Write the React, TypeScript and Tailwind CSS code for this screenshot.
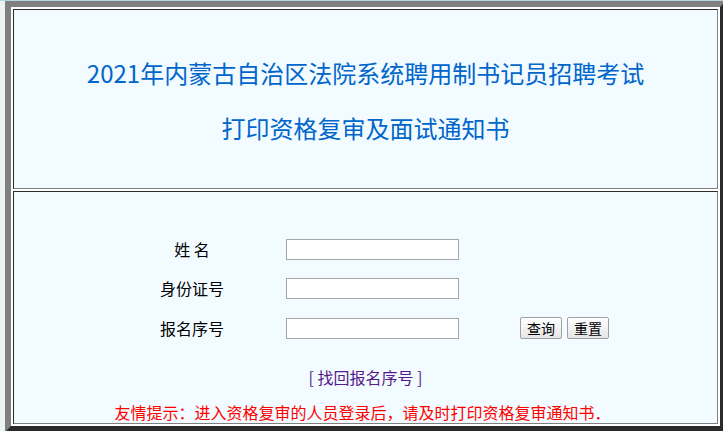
import { useState } from "react";

const rows = [
  { label: "姓 名", key: "name" },
  { label: "身份证号", key: "idcard" },
  { label: "报名序号", key: "serial" },
];

export default function App() {
  const [form, setForm] = useState<Record<string, string>>({ name: "", idcard: "", serial: "" })

  return (
    <div className="w-[723px] h-[431px] overflow-hidden bg-[#eef3f3] font-['Noto_Sans_CJK_SC',sans-serif]">
      <div className="h-[1px] bg-[#b4d6e0]" />
      <div className="ml-[5px] w-[721px] border-[6px] border-t-[#808080] border-l-[#808080] border-r-[#2b2b2b] border-b-[#2b2b2b] bg-white p-[2px] flex flex-col gap-[2px]">
        {/* header cell */}
        <div className="border border-t-[#2b2b2b] border-l-[#2b2b2b] border-r-[#808080] border-b-[#808080] bg-[#f2fbff] pt-[47px] pb-[44px] flex flex-col items-center gap-[23px] text-[24px] leading-[32px] text-[#0066cc]">
          <p>2021年内蒙古自治区法院系统聘用制书记员招聘考试</p>
          <p>打印资格复审及面试通知书</p>
        </div>

        {/* form cell */}
        <div className="border border-t-[#2b2b2b] border-l-[#2b2b2b] border-r-[#808080] border-b-[#808080] bg-[#f2fbff] pt-[46px] pb-[1px] flex flex-col">
          {rows.map((r, i) => (
            <div key={r.key} className={`flex items-center h-[22px] ${i === 1 ? 'mt-[17px]' : i === 2 ? 'mt-[18px]' : ''}`}>
              <div className="ml-[126px] w-[104px] text-center text-[16px] leading-[20px] text-black">{r.label}</div>
              <input
                value={form[r.key]}
                onChange={(e) => setForm({ ...form, [r.key]: e.target.value })}
                className="ml-[42px] w-[173px] h-[21px] border border-[#a6a6a6] bg-white outline-none px-1 text-[13px]"
              />
              {i === 2 && (
                <div className="ml-[61px] flex gap-[5px]">
                  <button className="w-[42px] h-[22px] border border-[#a0a0a0] rounded-[2px] bg-gradient-to-b from-white to-[#e6e6e6] text-[14px] leading-[18px] text-black">查询</button>
                  <button className="w-[42px] h-[22px] border border-[#a0a0a0] rounded-[2px] bg-gradient-to-b from-white to-[#e6e6e6] text-[14px] leading-[18px] text-black">重置</button>
                </div>
              )}
            </div>
          ))}

          <p className="mt-[28px] text-center text-[16px] leading-[20px] text-[#551a8b]">
            <a href="#">[ 找回报名序号 ]</a>
          </p>
          <p className="mt-[15px] text-center text-[16px] leading-[20px] text-[#ff0000] -translate-x-[3px]">
            友情提示：进入资格复审的人员登录后，请及时打印资格复审通知书．
          </p>
        </div>
      </div>
    </div>
  )
}
